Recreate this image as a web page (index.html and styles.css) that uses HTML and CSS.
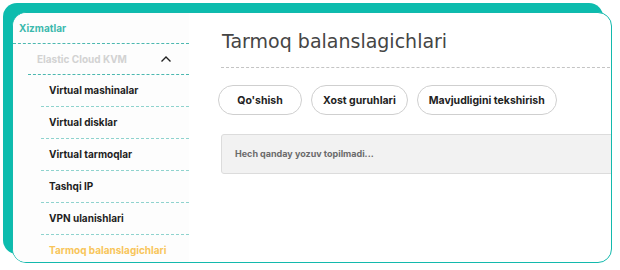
FILE: index.html
```html
<!DOCTYPE html>
<html lang="uz">
<head>
    <meta charset="UTF-8">
    <title>Tarmoq balanslagichlari</title>
    <link rel="stylesheet" href="styles.css">
</head>
<body>
    <div class="card">
        <aside class="sidebar">
            <div class="side-title">Xizmatlar</div>
            <div class="side-group">
                <span>Elastic Cloud KVM</span>
                <svg class="chevron" width="12" height="8" viewBox="0 0 12 8">
                    <path d="M1.5 6.5 L6 2 L10.5 6.5" fill="none" stroke="#222" stroke-width="1.4"/>
                </svg>
            </div>
            <ul class="side-list">
                <li>Virtual mashinalar</li>
                <li>Virtual disklar</li>
                <li>Virtual tarmoqlar</li>
                <li>Tashqi IP</li>
                <li>VPN ulanishlari</li>
                <li class="active">Tarmoq balanslagichlari</li>
            </ul>
        </aside>
        <main class="content">
            <h1 class="page-title">Tarmoq balanslagichlari</h1>
            <div class="actions">
                <button class="pill">Qo'shish</button>
                <button class="pill">Xost guruhlari</button>
                <button class="pill">Mavjudligini tekshirish</button>
            </div>
            <div class="empty">Hech qanday yozuv topilmadi...</div>
        </main>
    </div>
</body>
</html>
```

FILE: styles.css
```css
body {
    margin: 0;
    padding: 12px 0 0 12px;
    background: #fff;
    font-family: Inter, "Noto Sans", sans-serif;
}
.card {
    display: flex;
    width: 600px;
    height: 251px;
    box-sizing: border-box;
    background: #fff;
    border: 1.5px solid #13b9ad;
    border-radius: 14px;
    box-shadow: -9px -9px 0 0 #0dbcae;
    overflow: hidden;
}
.sidebar {
    width: 176px;
    flex-shrink: 0;
    background: #fdfdfd;
}
.side-title {
    padding: 8px 0 8px 6px;
    line-height: 14px;
    font-size: 10px;
    font-weight: 700;
    color: #3cb9ad;
    border-bottom: 1px dashed #4cb8b0;
}
.side-group {
    display: flex;
    align-items: center;
    justify-content: space-between;
    margin-left: 15px;
    padding: 8px 17px 8px 9px;
    line-height: 14px;
    font-size: 10px;
    font-weight: 700;
    color: #d2d2d2;
    border-bottom: 1px dashed #4cb8b0;
}
.side-list {
    list-style: none;
    margin: 0 0 0 28px;
    padding: 0;
}
.side-list li {
    padding: 8px 0 9px 8px;
    line-height: 14px;
    font-size: 10px;
    font-weight: 700;
    color: #1e1e1e;
    border-bottom: 1px dashed #8fd3ce;
}
.side-list li.active {
    color: #f8c55a;
    border-bottom: none;
}
.content {
    flex: 1;
    padding: 0 0 0 32px;
    min-width: 0;
}
.page-title {
    margin: 0 -4px 0 0;
    padding: 14px 0 12px 1px;
    font-family: "DejaVu Sans", Verdana, sans-serif;
    font-size: 19px;
    font-weight: 400;
    line-height: 28px;
    color: #454545;
    border-bottom: 1px dashed #c4c4c4;
}
.actions {
    display: flex;
    gap: 9px;
    margin: 17px 0 0 -3px;
}
.pill {
    min-width: 84px;
    height: 30px;
    padding: 0 11px;
    border: 1px solid #cfcfcf;
    border-radius: 15px;
    background: #fff;
    font-family: Inter, "Noto Sans", sans-serif;
    font-size: 10.5px;
    font-weight: 700;
    color: #222;
}
.empty {
    margin: 19px -10px 0 0;
    padding: 0 13px;
    height: 38px;
    line-height: 38px;
    background: #f2f2f2;
    border: 1px solid #dcdcdc;
    border-radius: 3px;
    font-size: 9px;
    font-weight: 700;
    color: #6b6b6b;
}
```
